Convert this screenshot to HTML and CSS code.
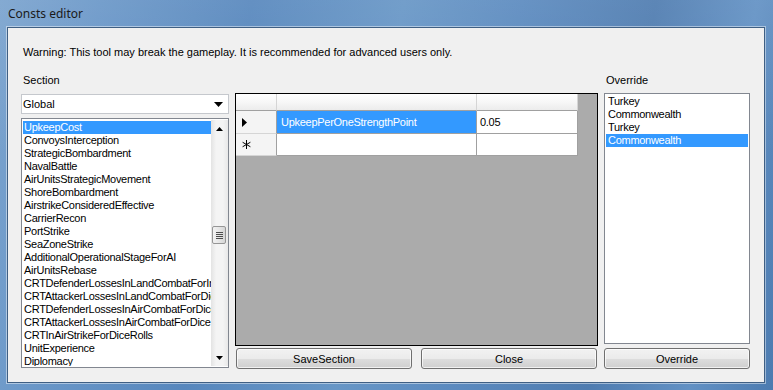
FILE: index.html
```html
<!DOCTYPE html>
<html>
<head>
<meta charset="utf-8">
<link rel="stylesheet" href="styles.css">
</head>
<body>
<div class="window">
  <div class="titlebar"><span class="title">Consts editor</span></div>
  <div class="client">
    <div class="warning">Warning: This tool may break the gameplay. It is recommended for advanced users only.</div>
    <div class="main">
      <div class="col col-left">
        <div class="label">Section</div>
        <div class="combo">
          <span class="combo-text">Global</span>
          <svg class="combo-arrow" width="9" height="5" viewBox="0 0 9 5"><path d="M0 0H9L4.5 5Z" fill="#000"/></svg>
        </div>
        <div class="listbox sections">
          <div class="items">
            <div class="item selected">UpkeepCost</div>
            <div class="item">ConvoysInterception</div>
            <div class="item">StrategicBombardment</div>
            <div class="item">NavalBattle</div>
            <div class="item">AirUnitsStrategicMovement</div>
            <div class="item">ShoreBombardment</div>
            <div class="item">AirstrikeConsideredEffective</div>
            <div class="item">CarrierRecon</div>
            <div class="item">PortStrike</div>
            <div class="item">SeaZoneStrike</div>
            <div class="item">AdditionalOperationalStageForAI</div>
            <div class="item">AirUnitsRebase</div>
            <div class="item">CRTDefenderLossesInLandCombatForInitialDiceRolls</div>
            <div class="item">CRTAttackerLossesInLandCombatForDiceRolls</div>
            <div class="item">CRTDefenderLossesInAirCombatForDiceRolls</div>
            <div class="item">CRTAttackerLossesInAirCombatForDiceRolls</div>
            <div class="item">CRTInAirStrikeForDiceRolls</div>
            <div class="item">UnitExperience</div>
            <div class="item">Diplomacy</div>
          </div>
          <div class="vscroll">
            <div class="sb-btn">
              <svg width="7" height="4" viewBox="0 0 7 4"><path d="M0 4H7L3.5 0Z" fill="#000"/></svg>
            </div>
            <div class="sb-track">
              <div class="sb-thumb">
                <svg width="7" height="7" viewBox="0 0 7 7"><path d="M0 .5H7M0 2.5H7M0 4.5H7M0 6.5H7" stroke="#4d4d4d" stroke-width="1"/></svg>
              </div>
            </div>
            <div class="sb-btn">
              <svg width="7" height="4" viewBox="0 0 7 4"><path d="M0 0H7L3.5 4Z" fill="#000"/></svg>
            </div>
          </div>
        </div>
      </div>

      <div class="col col-mid">
        <div class="grid">
          <div class="dgv">
            <div class="cell hdr corner"></div>
            <div class="cell hdr"></div>
            <div class="cell hdr"></div>
            <div class="cell rowhdr">
              <svg width="5" height="9" viewBox="0 0 5 9"><path d="M0 0L5 4.5L0 9Z" fill="#000"/></svg>
            </div>
            <div class="cell sel">UpkeepPerOneStrengthPoint</div>
            <div class="cell">0.05</div>
            <div class="cell rowhdr">
              <svg width="9" height="9" viewBox="0 0 9 9"><path d="M4.5 0V9M0.6 2.25L8.4 6.75M0.6 6.75L8.4 2.25" stroke="#000" stroke-width="1"/></svg>
            </div>
            <div class="cell"></div>
            <div class="cell"></div>
          </div>
        </div>
        <div class="buttons">
          <button class="btn btn-save">SaveSection</button>
          <button class="btn btn-close">Close</button>
        </div>
      </div>

      <div class="col col-right">
        <div class="label">Override</div>
        <div class="listbox overrides">
          <div class="items">
            <div class="item">Turkey</div>
            <div class="item">Commonwealth</div>
            <div class="item">Turkey</div>
            <div class="item selected">Commonwealth</div>
          </div>
        </div>
        <button class="btn btn-override">Override</button>
      </div>
    </div>
  </div>
</div>
</body>
</html>
```

FILE: styles.css
```css
* { box-sizing: border-box; }

html, body {
  margin: 0;
  padding: 0;
  width: 773px;
  height: 390px;
  overflow: hidden;
}

body {
  font-family: "Liberation Sans", Arial, sans-serif;
  font-size: 11px;
  color: #000;
  background: #5d8cbf;
}

.window {
  width: 773px;
  height: 390px;
  display: flex;
  flex-direction: column;
  padding: 0 8px 7px 7px;
  background:
    linear-gradient(180deg, rgba(255,255,255,0.08) 0%, rgba(255,255,255,0) 40%),
    linear-gradient(100deg, #7aa3ce 0%, #6a97c8 12%, #5787bd 30%, #6796c6 48%, #5b8abf 62%, #4f7cb0 78%, #6291c4 90%, #4c7bb0 100%);
}

.titlebar {
  height: 27px;
  flex: none;
  display: flex;
  align-items: center;
  padding-left: 1px;
  padding-bottom: 1px;
}

.title {
  font-family: "Noto Sans", "Liberation Sans", sans-serif;
  font-size: 12px;
  color: #1a1a1a;
}

.client {
  flex: 1;
  background: #f0f0f0;
  border: 1px solid #3f5f83;
  box-shadow: 0 0 0 1px rgba(255,255,255,0.45);
  padding: 18px 14px 0 13px;
  display: flex;
  flex-direction: column;
}

.warning {
  height: 13px;
  line-height: 13px;
  padding-left: 2px;
}

.main {
  margin-top: 15px;
  display: flex;
  gap: 6px;
}

.col {
  display: flex;
  flex-direction: column;
}

.col-left { width: 208px; }
.col-mid { width: 363px; padding-top: 19px; }
.col-right { width: 146px; }

.label {
  height: 19px;
  line-height: 13px;
  padding-left: 2px;
}

.combo {
  margin-top: 1px;
  height: 20px;
  background: #fff;
  border: 1px solid #c5c8cd;
  display: flex;
  align-items: center;
  justify-content: space-between;
  padding: 0 5px 0 1px;
}

.combo-arrow { margin-top: 1px; }

.listbox {
  background: #fff;
  border: 1px solid #828790;
  overflow: hidden;
}

.sections {
  margin-top: 4px;
  height: 250px;
  display: flex;
  padding: 2px 0 1px 1px;
}

.sections .items { flex: 1; overflow: hidden; }

.items .item {
  height: 13px;
  line-height: 13px;
  padding-left: 1px;
  white-space: nowrap;
  overflow: hidden;
  letter-spacing: -0.28px;
}

.items .item.selected {
  background: #3399ff;
  color: #fff;
}

.vscroll {
  width: 17px;
  flex: none;
  margin-top: -1px;
  display: flex;
  flex-direction: column;
  background: linear-gradient(90deg, #e3e3e3 0%, #f4f4f4 30%, #f4f4f4 70%, #e8e8e8 100%);
}

.sb-btn {
  height: 17px;
  display: flex;
  align-items: center;
  justify-content: center;
}

.sb-track {
  flex: 1;
  position: relative;
}

.sb-thumb {
  position: absolute;
  left: 1px;
  right: 2px;
  top: 89px;
  height: 18px;
  border: 1px solid #969696;
  border-radius: 2px;
  background: linear-gradient(90deg, #f2f2f2 0%, #e6e6e6 50%, #d6d6d6 100%);
  display: flex;
  align-items: center;
  justify-content: center;
}

.grid {
  height: 253px;
  border: 1px solid #000;
  background: #ababab;
}

.dgv {
  display: grid;
  grid-template-columns: 41px 200px 101px;
  grid-template-rows: 17px 23px 22px;
  width: 342px;
}

.dgv .cell {
  background: #fff;
  border-right: 1px solid #a0a0a0;
  border-bottom: 1px solid #a0a0a0;
  display: flex;
  align-items: center;
  padding-left: 3px;
  white-space: nowrap;
  letter-spacing: -0.28px;
}

.dgv .hdr {
  background: linear-gradient(180deg, #ffffff 0%, #f7f7f7 50%, #ececec 100%);
  border-right: 1px solid #d5d5d5;
  border-bottom: 1px solid #a0a0a0;
}

.dgv .rowhdr {
  background: #f4f4f4;
  border-right: 1px solid #a0a0a0;
  border-bottom: 1px solid #d5d5d5;
  padding-left: 6px;
}

.dgv .sel {
  background: #3399ff;
  color: #fff;
  padding-left: 4px;
}

.buttons {
  margin-top: 2px;
  display: flex;
  gap: 9px;
  padding-left: 1px;
}

.btn {
  font-family: "Liberation Sans", Arial, sans-serif;
  font-size: 11px;
  color: #000;
  height: 21px;
  border: 1px solid #707070;
  border-radius: 3px;
  background: linear-gradient(180deg, #f2f2f2 0%, #ebebeb 50%, #dddddd 51%, #cfcfcf 100%);
  box-shadow: inset 0 0 0 1px rgba(255,255,255,0.7);
  padding: 0;
  margin: 0;
}

.btn-save, .btn-close { width: 176px; }

.overrides {
  height: 251px;
  padding: 1px 1px 0 1px;
}

.overrides .item { padding-left: 2px; }

.btn-override {
  margin-top: 4px;
  width: 146px;
}
```
